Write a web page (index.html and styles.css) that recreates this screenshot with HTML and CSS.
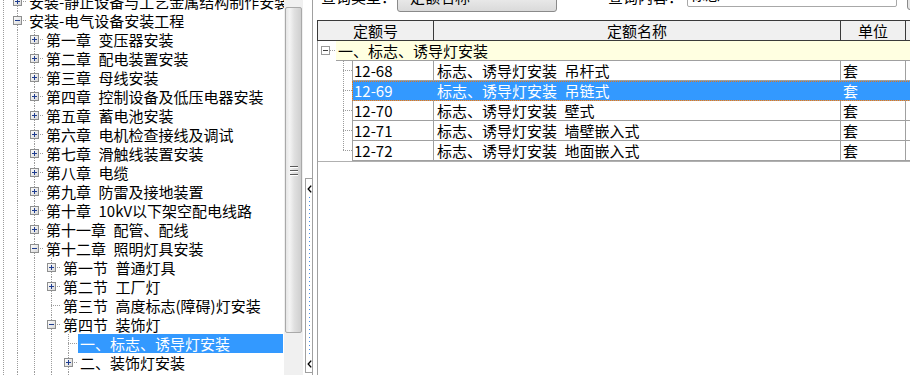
FILE: index.html
```html
<!DOCTYPE html>
<html lang="zh-CN">
<head>
<meta charset="utf-8">
<title>定额查询</title>
<link rel="stylesheet" href="styles.css">
</head>
<body>
<svg class="defs" width="0" height="0">
  <defs>
    <linearGradient id="bxg" x1="0" y1="0" x2="1" y2="1">
      <stop offset="0" stop-color="#ffffff"/>
      <stop offset="1" stop-color="#d6d6d6"/>
    </linearGradient>
    <symbol id="plus" viewBox="0 0 9 9">
      <rect x="0.5" y="0.5" width="8" height="8" fill="url(#bxg)" stroke="#8e8f8f"/>
      <path d="M2 4.5H7M4.5 2V7" stroke="#1f3d8f" fill="none"/>
    </symbol>
    <symbol id="minus" viewBox="0 0 9 9">
      <rect x="0.5" y="0.5" width="8" height="8" fill="url(#bxg)" stroke="#8e8f8f"/>
      <path d="M2 4.5H7" stroke="#1f3d8f" fill="none"/>
    </symbol>
    <symbol id="gminus" viewBox="0 0 9 9">
      <rect x="0.5" y="0.5" width="8" height="8" fill="#ffffff" stroke="#9a9a9a"/>
      <path d="M2 4.5H7" stroke="#404040" fill="none"/>
    </symbol>
  </defs>
</svg>

<div class="left">
  <div class="tree">
    <div class="row"><span class="c"><svg class="bx"><use href="#plus"/></svg></span><span class="t">安装-静止设备与工艺金属结构制作安装</span></div>
    <div class="row"><span class="c"><svg class="bx"><use href="#minus"/></svg></span><span class="t">安装-电气设备安装工程</span></div>
    <div class="row"><span class="g"></span><span class="c"><svg class="bx"><use href="#plus"/></svg></span><span class="t">第一章&ensp;变压器安装</span></div>
    <div class="row"><span class="g"></span><span class="c"><svg class="bx"><use href="#plus"/></svg></span><span class="t">第二章&ensp;配电装置安装</span></div>
    <div class="row"><span class="g"></span><span class="c"><svg class="bx"><use href="#plus"/></svg></span><span class="t">第三章&ensp;母线安装</span></div>
    <div class="row"><span class="g"></span><span class="c"><svg class="bx"><use href="#plus"/></svg></span><span class="t">第四章&ensp;控制设备及低压电器安装</span></div>
    <div class="row"><span class="g"></span><span class="c"><svg class="bx"><use href="#plus"/></svg></span><span class="t">第五章&ensp;蓄电池安装</span></div>
    <div class="row"><span class="g"></span><span class="c"><svg class="bx"><use href="#plus"/></svg></span><span class="t">第六章&ensp;电机检查接线及调试</span></div>
    <div class="row"><span class="g"></span><span class="c"><svg class="bx"><use href="#plus"/></svg></span><span class="t">第七章&ensp;滑触线装置安装</span></div>
    <div class="row"><span class="g"></span><span class="c"><svg class="bx"><use href="#plus"/></svg></span><span class="t">第八章&ensp;电缆</span></div>
    <div class="row"><span class="g"></span><span class="c"><svg class="bx"><use href="#plus"/></svg></span><span class="t">第九章&ensp;防雷及接地装置</span></div>
    <div class="row"><span class="g"></span><span class="c"><svg class="bx"><use href="#plus"/></svg></span><span class="t">第十章&ensp;10kV以下架空配电线路</span></div>
    <div class="row"><span class="g"></span><span class="c"><svg class="bx"><use href="#plus"/></svg></span><span class="t">第十一章&ensp;配管、配线</span></div>
    <div class="row"><span class="g"></span><span class="c"><svg class="bx"><use href="#minus"/></svg></span><span class="t">第十二章&ensp;照明灯具安装</span></div>
    <div class="row"><span class="g"></span><span class="g"></span><span class="c"><svg class="bx"><use href="#plus"/></svg></span><span class="t">第一节&ensp;普通灯具</span></div>
    <div class="row"><span class="g"></span><span class="g"></span><span class="c"><svg class="bx"><use href="#plus"/></svg></span><span class="t">第二节&ensp;工厂灯</span></div>
    <div class="row"><span class="g"></span><span class="g"></span><span class="c"></span><span class="t">第三节&ensp;高度标志(障碍)灯安装</span></div>
    <div class="row"><span class="g"></span><span class="g"></span><span class="c"><svg class="bx"><use href="#minus"/></svg></span><span class="t">第四节&ensp;装饰灯</span></div>
    <div class="row"><span class="g"></span><span class="g"></span><span class="g"></span><span class="c"></span><span class="t sel">一、标志、诱导灯安装</span></div>
    <div class="row"><span class="g"></span><span class="g"></span><span class="g"></span><span class="c"><svg class="bx"><use href="#plus"/></svg></span><span class="t">二、装饰灯安装</span></div>
    <div class="row"><span class="g"></span><span class="g"></span><span class="g"></span><span class="c"></span><span class="t">三、歌舞厅灯具安装</span></div>
  </div>
</div>

<div class="vscroll">
  <div class="thumb">
    <span class="grip"></span><span class="grip"></span><span class="grip"></span>
  </div>
</div>

<div class="splitcol">
  <div class="splitter">
    <svg class="chev" width="5" height="8" viewBox="0 0 5 8"><polyline points="4.2,0.6 1.2,4 4.2,7.4" fill="none" stroke="#000" stroke-width="1.4"/></svg>
    <span class="dots"></span>
    <svg class="chev" width="5" height="8" viewBox="0 0 5 8"><polyline points="4.2,0.6 1.2,4 4.2,7.4" fill="none" stroke="#000" stroke-width="1.4"/></svg>
  </div>
</div>

<div class="right">
  <div class="toolbar">
    <span class="lbl t1">查询类型：</span>
    <div class="combo"><span class="ctext">定额名称</span></div>
    <span class="lbl t2">查询内容：</span>
    <div class="input"><span class="itext">标志</span></div>
    <div class="btn"></div>
  </div>
  <div class="grid">
    <div class="ghead">
      <span class="h1">定额号</span>
      <span class="h2">定额名称</span>
      <span class="h3">单位</span>
      <span class="h4"></span>
    </div>
    <div class="gbody">
      <div class="grp">
        <svg class="gbx"><use href="#gminus"/></svg>
        <span class="gline"></span>
        <span class="gname">一、标志、诱导灯安装</span>
      </div>
      <div class="drow">
        <span class="lead"></span>
        <div class="cells"><span class="c1">12-68</span><span class="c2">标志、诱导灯安装&ensp;吊杆式</span><span class="c3">套</span><span class="c4"></span></div>
      </div>
      <div class="drow sel">
        <span class="lead"></span>
        <div class="cells"><span class="c1">12-69</span><span class="c2">标志、诱导灯安装&ensp;吊链式</span><span class="c3">套</span><span class="c4"></span></div>
      </div>
      <div class="drow">
        <span class="lead"></span>
        <div class="cells"><span class="c1">12-70</span><span class="c2">标志、诱导灯安装&ensp;壁式</span><span class="c3">套</span><span class="c4"></span></div>
      </div>
      <div class="drow">
        <span class="lead"></span>
        <div class="cells"><span class="c1">12-71</span><span class="c2">标志、诱导灯安装&ensp;墙壁嵌入式</span><span class="c3">套</span><span class="c4"></span></div>
      </div>
      <div class="drow">
        <span class="lead last"></span>
        <div class="cells"><span class="c1">12-72</span><span class="c2">标志、诱导灯安装&ensp;地面嵌入式</span><span class="c3">套</span><span class="c4"></span></div>
      </div>
      <div class="gend"></div>
    </div>
  </div>
</div>
</body>
</html>
```

FILE: styles.css
```css
html, body {
  margin: 0;
  padding: 0;
}

body {
  width: 910px;
  height: 375px;
  overflow: hidden;
  display: flex;
  background: #ffffff;
  color: #000000;
  font-family: "Noto Sans CJK SC", "Noto Sans", sans-serif;
  font-size: 15px;
  line-height: 19px;
}

.defs {
  flex: none;
  width: 0;
  height: 0;
  overflow: hidden;
}

/* ---------- left tree ---------- */
.left {
  width: 284px;
  flex: none;
  overflow: hidden;
}

.tree {
  width: 283px;
  margin-top: -8px;
  background: repeating-linear-gradient(to bottom, #9c9c9c 0 1px, transparent 1px 2px) 3px 0 / 1px 100% no-repeat;
}

.row {
  display: flex;
  height: 19px;
  padding-left: 9px;
  white-space: nowrap;
}

.g {
  flex: none;
  width: 17px;
  height: 19px;
  background: repeating-linear-gradient(to bottom, #9c9c9c 0 1px, transparent 1px 2px) 8px 0 / 1px 100% no-repeat;
}

.c {
  flex: none;
  width: 18px;
  height: 19px;
  display: flex;
  align-items: flex-start;
  background:
    repeating-linear-gradient(to right, #9c9c9c 0 1px, transparent 1px 2px) 8px 9px / 10px 1px no-repeat,
    repeating-linear-gradient(to bottom, #9c9c9c 0 1px, transparent 1px 2px) 8px 0 / 1px 100% no-repeat;
}

.bx {
  display: block;
  width: 9px;
  height: 9px;
  margin: 5px 0 0 4px;
}

.t {
  flex: none;
  padding: 0 2px;
  height: 19px;
}

.t.sel {
  flex: 1;
  background: #3399ff;
  color: #ffffff;
}

/* ---------- scrollbar ---------- */
.vscroll {
  width: 19px;
  flex: none;
  box-sizing: border-box;
  padding: 7px 1px 0;
  background: #f0f0f0;
}

.thumb {
  height: 326px;
  box-sizing: border-box;
  border: 1px solid #a9a9a9;
  border-radius: 2px;
  background: linear-gradient(to right, #e6e6e6, #f4f4f4 25%, #e0e0e0 55%, #cfcfcf);
  display: flex;
  flex-direction: column;
  align-items: center;
  justify-content: center;
  gap: 3px;
}

.grip {
  display: block;
  width: 8px;
  height: 1px;
  background: #5a5a5a;
  box-shadow: 0 1px 0 #ffffff;
}

/* ---------- splitter ---------- */
.splitcol {
  width: 9px;
  flex: none;
  box-sizing: border-box;
  padding: 178px 0 0 2px;
  background: #ffffff;
}

.splitter {
  height: 195px;
  box-sizing: border-box;
  border: 1px solid #a0a0a0;
  border-right: 0;
  display: flex;
  flex-direction: column;
  align-items: flex-start;
  padding-top: 6px;
}

.chev {
  display: block;
  margin-left: 1px;
  flex: none;
}

.dots {
  display: block;
  width: 1px;
  height: 160px;
  margin: 4px 0 3px 3px;
  background: repeating-linear-gradient(to bottom, #4b8fe8 0 1px, transparent 1px 4px);
}

/* ---------- right panel ---------- */
.right {
  flex: 1;
  min-width: 0;
  border-left: 1px solid #a0a0a0;
  display: flex;
  flex-direction: column;
  overflow: hidden;
}

.toolbar {
  display: flex;
  align-items: flex-start;
  height: 20px;
  flex: none;
  white-space: nowrap;
}

.lbl {
  flex: none;
  margin-top: -13px;
}

.lbl.t1 {
  margin-left: 8px;
}

.combo {
  flex: none;
  width: 160px;
  height: 22px;
  margin: -10px 0 0 1px;
  box-sizing: border-box;
  border: 1px solid #8a8a8a;
  border-radius: 3px;
  background: linear-gradient(to bottom, #f3f3f3, #dadada);
  padding-left: 12px;
}

.ctext {
  display: block;
  margin-top: -4px;
}

.lbl.t2 {
  margin-left: 51px;
}

.input {
  flex: none;
  width: 210px;
  height: 22px;
  margin: -15px 0 0 4px;
  box-sizing: border-box;
  border: 1px solid #a8a8a8;
  border-radius: 2px;
  background: #ffffff;
  padding-left: 2px;
}

.itext {
  display: block;
  margin-top: -2px;
}

.btn {
  flex: none;
  width: 30px;
  height: 22px;
  margin: -12px 0 0 10px;
  box-sizing: border-box;
  border: 1px solid #8a8a8a;
  border-radius: 3px;
  background: #e6e6e6;
}

/* ---------- grid ---------- */
.grid {
  flex: 1;
  width: 700px;
  margin-left: 4px;
  display: flex;
  flex-direction: column;
}

.ghead {
  display: flex;
  flex: none;
  height: 21px;
  box-sizing: border-box;
  border: 1px solid #3a3a3a;
  border-right: 0;
  background: #f0f0f0;
}

.ghead span {
  flex: none;
  box-sizing: border-box;
  border-right: 1px solid #3a3a3a;
  text-align: center;
  height: 19px;
}

.ghead .h1 { width: 116px; }
.ghead .h2 { width: 407px; }
.ghead .h3 { width: 65px; }
.ghead .h4 { flex: 1; }

.gbody {
  flex: 1;
  border-left: 1px solid #a0a0a0;
}

.grp {
  display: flex;
  height: 20px;
}

.gbx {
  display: block;
  flex: none;
  width: 9px;
  height: 9px;
  margin: 5px 0 0 3px;
}

.gline {
  flex: none;
  width: 6px;
  height: 20px;
  background: repeating-linear-gradient(to right, #9c9c9c 0 1px, transparent 1px 2px) 0 9px / 6px 1px no-repeat;
}

.gname {
  flex: 1;
  height: 19px;
  padding-left: 2px;
  background: #ffffe1;
  border-bottom: 1px solid #a0a0a0;
  white-space: nowrap;
}

.drow {
  display: flex;
  height: 20px;
}

.lead {
  flex: none;
  width: 34px;
  height: 20px;
  background:
    repeating-linear-gradient(to right, #9c9c9c 0 1px, transparent 1px 2px) 25px 9px / 9px 1px no-repeat,
    repeating-linear-gradient(to bottom, #9c9c9c 0 1px, transparent 1px 2px) 25px 0 / 1px 100% no-repeat;
}

.lead.last {
  background:
    repeating-linear-gradient(to right, #9c9c9c 0 1px, transparent 1px 2px) 25px 9px / 9px 1px no-repeat,
    repeating-linear-gradient(to bottom, #9c9c9c 0 1px, transparent 1px 2px) 25px 0 / 1px 10px no-repeat;
}

.cells {
  flex: 1;
  display: flex;
  border-left: 1px solid #a0a0a0;
  border-bottom: 1px solid #a0a0a0;
  white-space: nowrap;
}

.cells span {
  flex: none;
  box-sizing: border-box;
  height: 19px;
  border-right: 1px solid #a0a0a0;
}

.cells .c1 { width: 81px; padding-left: 1px; }
.cells .c2 { width: 407px; padding-left: 3px; }
.cells .c3 { width: 65px; padding-left: 2px; }
.cells .c4 { flex: 1; }

.drow.sel .cells {
  background: #3399ff;
  color: #ffffff;
  outline: 1px dotted #e0761c;
  outline-offset: -1px;
}

.drow.sel .cells span {
  border-right-color: transparent;
}

.gend {
  border-top: 1px solid #b0b0b0;
}
```
